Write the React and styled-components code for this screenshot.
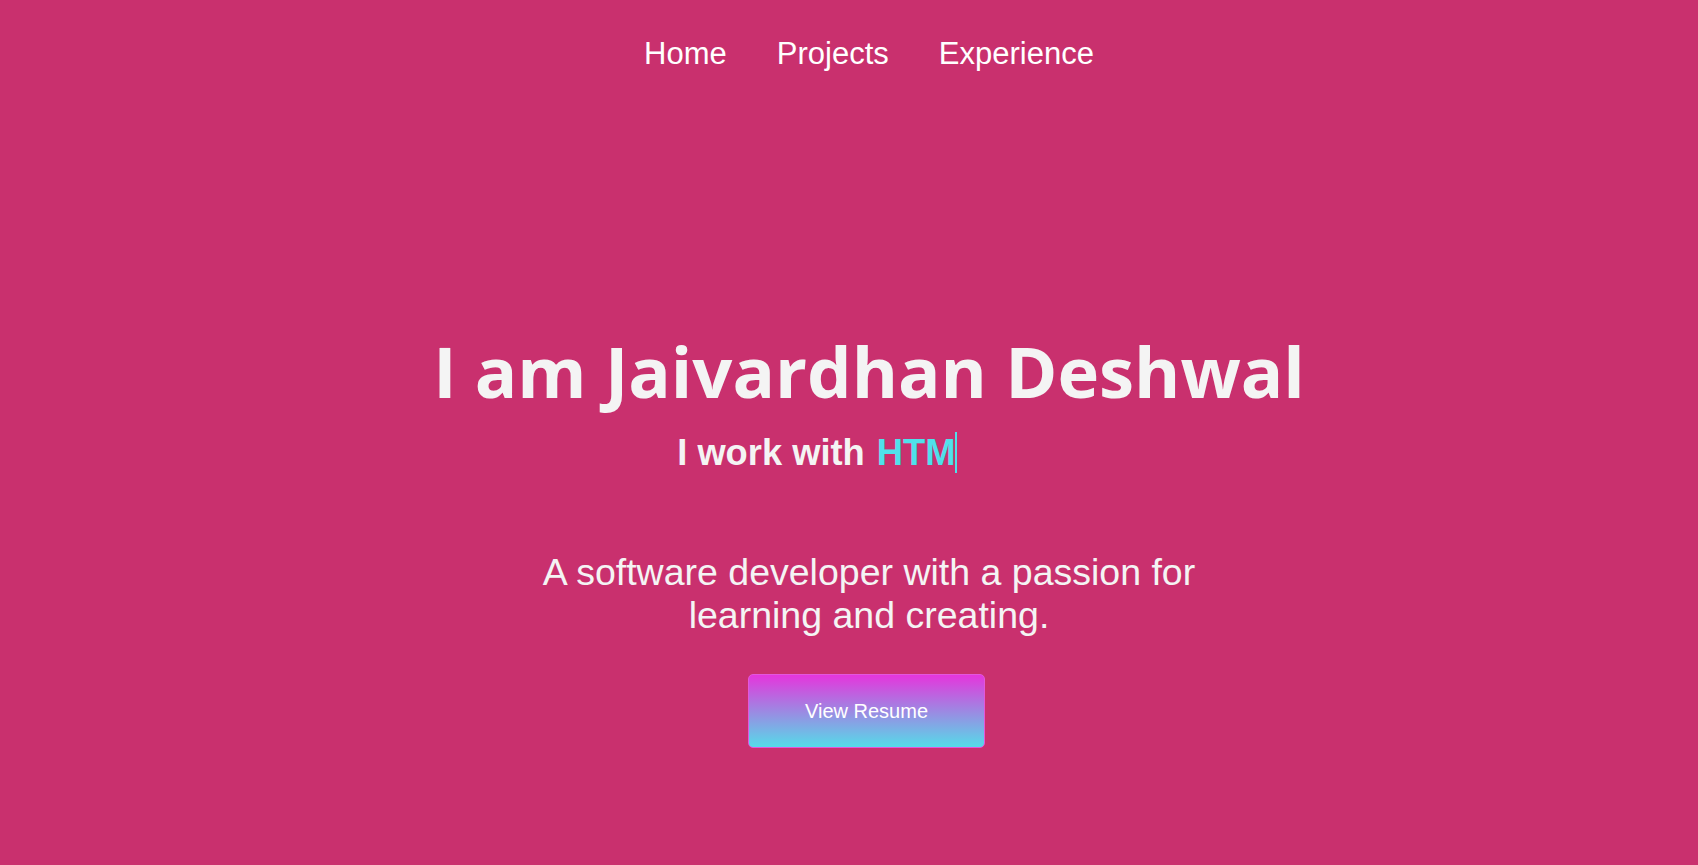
import React from 'react';
import styled, { createGlobalStyle } from 'styled-components';

const GlobalStyle = createGlobalStyle`
  html, body {
    margin: 0;
    padding: 0;
    background-color: #c9306e;
  }
  body {
    font-family: "Liberation Sans", Arial, sans-serif;
    color: #f4f4f4;
  }
`;

const Page = styled.div`
  min-height: 865px;
  background-color: #c9306e;
  display: flex;
  flex-direction: column;
`;

const NavList = styled.ul`
  list-style: none;
  display: flex;
  justify-content: center;
  gap: 50px;
  margin: 0;
  padding: 32px 0 0 40px;
`;

const NavItem = styled.li`
  a {
    color: #ffffff;
    text-decoration: none;
    font-size: 31px;
    line-height: 44px;
  }
`;

const Hero = styled.section`
  display: flex;
  flex-direction: column;
  align-items: center;
  padding: 255px 0 0 40px;
  text-align: center;
`;

const Title = styled.h1`
  font-family: "Open Sans", "Noto Sans", sans-serif;
  font-weight: 700;
  font-size: 70.5px;
  line-height: 80px;
  margin: 0;
  color: #f4f4f4;
`;

const Subtitle = styled.h2`
  display: flex;
  align-items: center;
  font-size: 36.3px;
  font-weight: 700;
  margin: 21px 0 0 0;
  color: #f4f4f4;
`;

const TypedBox = styled.span`
  display: inline-block;
  width: 184px;
  margin-left: 12px;
  text-align: left;
`;

const Typed = styled.span`
  color: #4fe1ea;
  border-right: 2px solid #4fe1ea;
  line-height: 40px;
`;

const Blurb = styled.p`
  max-width: 700px;
  font-size: 37.5px;
  margin: 77px 0 0 0;
  color: #f4f4f4;
`;

const ResumeButton = styled.button`
  margin: 37px 5px 0 0;
  width: 237px;
  height: 74px;
  border: 1px solid #e257dc;
  border-radius: 5px;
  background: linear-gradient(to bottom, #e535dc, #55dbe9);
  color: #ffffff;
  font-family: "Liberation Sans", Arial, sans-serif;
  font-size: 20px;
  cursor: pointer;
`;

const links = ['Home', 'Projects', 'Experience'];

export default function App() {
  return (
    <Page>
      <GlobalStyle />
      <nav>
        <NavList>
          {links.map(l => (
            <NavItem key={l}>
              <a href={`#${l.toLowerCase()}`}>{l}</a>
            </NavItem>
          ))}
        </NavList>
      </nav>
      <Hero>
        <Title>I am Jaivardhan Deshwal</Title>
        <Subtitle>
          I work with
          <TypedBox>
            <Typed>HTM</Typed>
          </TypedBox>
        </Subtitle>
        <Blurb>A software developer with a passion for learning and creating.</Blurb>
        <ResumeButton>View Resume</ResumeButton>
      </Hero>
    </Page>
  );
}
